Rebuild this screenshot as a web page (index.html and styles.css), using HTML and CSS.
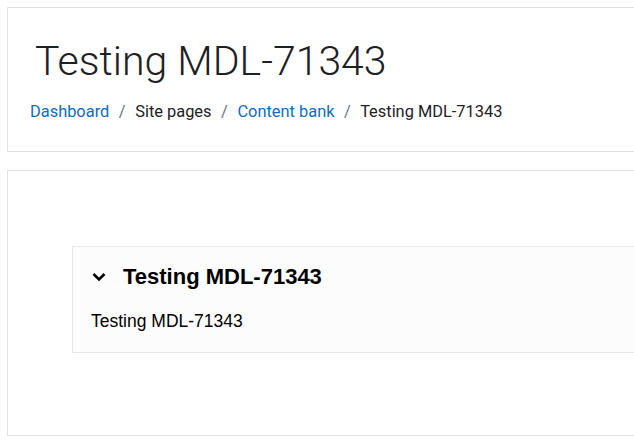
FILE: index.html
```html
<!DOCTYPE html>
<html lang="en">
<head>
    <meta charset="UTF-8">
    <title>Testing MDL-71343</title>
    <link rel="stylesheet" href="styles.css">
</head>
<body>
    <div class="page-header">
        <h1>Testing MDL-71343</h1>
        <nav class="breadcrumb">
            <a href="#">Dashboard</a>
            <span class="sep">/</span>
            <span>Site pages</span>
            <span class="sep">/</span>
            <a href="#">Content bank</a>
            <span class="sep">/</span>
            <span>Testing MDL-71343</span>
        </nav>
    </div>

    <div class="main-card">
        <div class="h5p-box">
            <div class="h5p-title">
                <svg class="chevron" width="16" height="16" viewBox="0 0 16 16">
                    <path d="M2.5 5 L8 10.5 L13.5 5" fill="none" stroke="#000" stroke-width="2.6"/>
                </svg>
                <h2>Testing MDL-71343</h2>
            </div>
            <p>Testing MDL-71343</p>
        </div>
    </div>
</body>
</html>
```

FILE: styles.css
```css
html, body {
    overflow: hidden;
}
body {
    margin: 0;
    padding: 7px 0 0 7px;
    background: #fff;
    font-family: Roboto, 'Liberation Sans', sans-serif;
    color: #1d2125;
}
.page-header {
    width: 700px;
    border: 1px solid #dee2e6;
    box-sizing: border-box;
    height: 145px;
    padding: 28px 22px 0 22px;
}
.page-header h1 {
    margin: 0 0 0 5px;
    font-weight: 300;
    font-size: 41px;
    line-height: 50px;
}
.breadcrumb {
    margin-top: 15px;
    font-size: 16.4px;
    line-height: 22px;
}
.breadcrumb a {
    color: #0f6cbf;
    text-decoration: none;
}
.breadcrumb .sep {
    color: #6a737b;
    padding: 0 5.5px;
}
.main-card {
    width: 700px;
    margin-top: 18px;
    height: 266px;
    box-sizing: border-box;
    border: 1px solid #dee2e6;
    padding: 75px 0 0 64px;
}
.h5p-box {
    background: #fcfcfc;
    border: 1px solid #e8e8e8;
    height: 107px;
    box-sizing: border-box;
    padding: 16px 18px;
    font-family: 'Liberation Sans', Arial, sans-serif;
    color: #000;
}
.h5p-title {
    display: flex;
    align-items: center;
    gap: 16px;
}
.h5p-title h2 {
    margin: 0;
    font-size: 22px;
    font-weight: bold;
    line-height: 28px;
}
.h5p-box p {
    margin: 20px 0 0 0;
    font-size: 17.5px;
    line-height: 20px;
}
```
